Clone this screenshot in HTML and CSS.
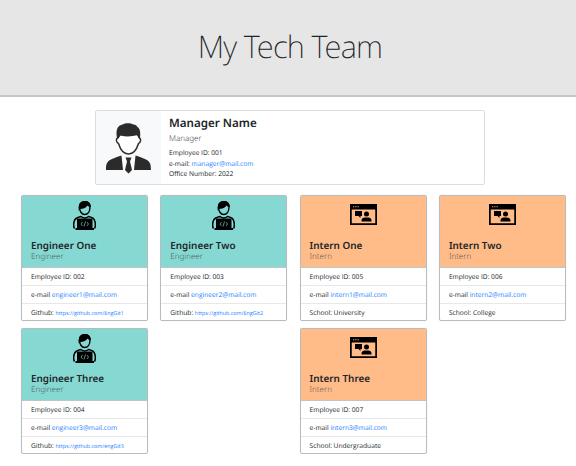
FILE: index.html
```html
<!DOCTYPE html>
<html lang="en">
<head>
<meta charset="utf-8">
<title>My Tech Team</title>
<link rel="stylesheet" href="styles.css">
</head>
<body>
<svg class="defs" aria-hidden="true">
  <symbol id="engineer" viewBox="0 0 46 58">
    <path d="M13 12C13 4 18 1.500 24 1.500c6 0 10 4 10 10 0 9-4 15.500-10.500 15.500S13 20 13 12z" fill="none" stroke="#000" stroke-width="2.800"/>
    <path d="M11.500 19C10 7 15 0 24 0c7 0 11 5 12 12-3 0-5-1-7-3-4 6-9 6-14 7z"/>
    <path d="M3 55c-2-3-2-8-1-13 1-7 5-9 14-11 5 4 10 4 15 0 9 2 12 4 13 11 1 5 1 10-1 13" fill="none" stroke="#000" stroke-width="3"/>
    <path d="M10 35h27q2 0 2 2v17h3v4H5v-4h3V37q0-2 2-2z"/>
    <path d="M19 42l-3 4 3 4M25 41l-3 10M28 42l3 4-3 4" fill="none" stroke="#86d9d2" stroke-width="1.300"/>
  </symbol>
  <symbol id="intern" viewBox="0 0 54 42">
    <path d="M0 0h54v42H0zM3.500 11v27.500h47V11z" fill-rule="evenodd"/>
    <path d="M6 5.500h2.500M10.500 5.500H13M15 5.500h2.500" stroke="#ffbb88" stroke-width="1.800"/>
    <path d="M10 14h14v10h-3v4l-4-4h-7zM23 35v-2c0-5 4-6 10-6s10 1 10 6v2z"/>
    <circle cx="33" cy="20" r="5"/>
  </symbol>
</svg>

<header class="banner"><h1>My Tech Team</h1></header>

<main>
  <section class="manager">
    <div class="portrait">
      <svg viewBox="0 0 90 101" fill="#2b2b2b">
        <path d="M23 30c-4 2-2 10 2 11 4 13 11 21 20 21s16-8 20-21c4-1 6-9 2-11l-4-7H27z" fill="#fff" stroke="#2b2b2b" stroke-width="3"/>
        <path d="M22 31C19 14 23 5 33 3c7-4 16-3 22 0 4 0 6 2 8 5 6 4 6 12 5 23h-2l-4-7q-16 5-33 1l-4 6z"/>
        <path d="M0 94c0-18 4-20 31-29l3 29zM90 94c0-18-4-20-31-29l-3 29z"/>
        <path d="M31 65l14 29 14-29-14 4z" fill="#fff"/>
        <path d="M39 69h12l-3 8 4 17-7 7-7-7 4-17z"/>
      </svg>
    </div>
    <div class="manager-body">
      <h2>Manager Name</h2>
      <p class="role">Manager</p>
      <p class="info">Employee ID: 001</p>
      <p class="info">e-mail: <a>manager@mail.com</a></p>
      <p class="info">Office Number: 2022</p>
    </div>
  </section>

  <section class="team">
    <article class="card engineer">
      <div class="head"><svg><use href="#engineer"/></svg><h3>Engineer One</h3><p class="role">Engineer</p></div>
      <ul><li>Employee ID: 002</li><li>e-mail <a>engineer1@mail.com</a></li><li>Github: <a class="repo">https://github.com/EngGit1</a></li></ul>
    </article>
    <article class="card engineer">
      <div class="head"><svg><use href="#engineer"/></svg><h3>Engineer Two</h3><p class="role">Engineer</p></div>
      <ul><li>Employee ID: 003</li><li>e-mail <a>engineer2@mail.com</a></li><li>Github: <a class="repo">https://github.com/EngGit2</a></li></ul>
    </article>
    <article class="card intern">
      <div class="head"><svg><use href="#intern"/></svg><h3>Intern One</h3><p class="role">Intern</p></div>
      <ul><li>Employee ID: 005</li><li>e-mail <a>intern1@mail.com</a></li><li>School: University</li></ul>
    </article>
    <article class="card intern">
      <div class="head"><svg><use href="#intern"/></svg><h3>Intern Two</h3><p class="role">Intern</p></div>
      <ul><li>Employee ID: 006</li><li>e-mail <a>intern2@mail.com</a></li><li>School: College</li></ul>
    </article>
    <article class="card engineer">
      <div class="head"><svg><use href="#engineer"/></svg><h3>Engineer Three</h3><p class="role">Engineer</p></div>
      <ul><li>Employee ID: 004</li><li>e-mail <a>engineer3@mail.com</a></li><li>Github: <a class="repo">https://github.com/engGit3</a></li></ul>
    </article>
    <article class="card intern third-column">
      <div class="head"><svg><use href="#intern"/></svg><h3>Intern Three</h3><p class="role">Intern</p></div>
      <ul><li>Employee ID: 007</li><li>e-mail <a>intern3@mail.com</a></li><li>School: Undergraduate</li></ul>
    </article>
  </section>
</main>
</body>
</html>
```
FILE: styles.css
```css
* { box-sizing: border-box; margin: 0; padding: 0; }
body {
  background: #fff;
  color: #212529;
  font-family: "Open Sans", sans-serif;
  font-size: 6.65px;
  text-rendering: geometricPrecision;
  overflow: hidden;
}
.defs { display: none; }
a { color: #1a80ff; }

.banner {
  height: 97px;
  padding-left: 4px;
  background: #e6e6e6;
  border-bottom: 2px solid #c6c6c6;
  display: flex;
  align-items: center;
  justify-content: center;
}
.banner h1 {
  font: 200 31px/40px "Noto Sans", sans-serif;
  letter-spacing: -0.75px;
  padding-bottom: 2px;
}

.manager {
  width: 390px;
  height: 75px;
  margin: 13px 0 0 95px;
  border: 1px solid #dcdddf;
  border-radius: 2px;
  display: flex;
}
.portrait {
  width: 65px;
  background: #f8f9fa;
  display: flex;
  justify-content: center;
  padding-top: 12px;
}
.portrait svg { width: 45px; height: 50.5px; }
.manager-body { padding: 5px 0 0 8px; }
h2 { font: 570 11.6px/16px "Noto Sans", sans-serif; }
.role { font: 300 8px/10px "Noto Sans", sans-serif; color: #4a4f54; }
.manager .role { margin: 1.5px 0 4.5px; }
.info { line-height: 10.5px; }

.team {
  margin: 10px 0 0 21px;
  display: grid;
  grid-template-columns: repeat(4, 127px);
  gap: 7px 12.3px;
}
.third-column { grid-column: 3; }
.card {
  height: 126px;
  border: 1px solid #b9bcbc;
  border-radius: 2px;
  box-shadow: 0 0 1px rgba(0, 0, 0, .15);
  overflow: hidden;
  background: #fff;
}
.head {
  height: 71px;
  padding: 5px 9px 0;
  display: flex;
  flex-direction: column;
}
.engineer .head { background: #86d9d2; }
.intern .head { background: #ffbb88; }
.head svg { width: 23px; height: 29px; align-self: center; }
.intern .head svg { width: 27px; height: 21px; margin: 3px 0 5px; }
.head h3 { font: 570 9.9px/12px "Noto Sans", sans-serif; margin-top: 9px; }
.head .role { opacity: .85; margin-top: 1px; }
ul { list-style: none; }
li {
  height: 18px;
  padding-left: 9px;
  line-height: 17px;
  border-top: 1px solid #e8e8e8;
  white-space: nowrap;
}
li:first-child { border-color: #bfc4c4; }
.repo { font-size: 5.4px; }
```
